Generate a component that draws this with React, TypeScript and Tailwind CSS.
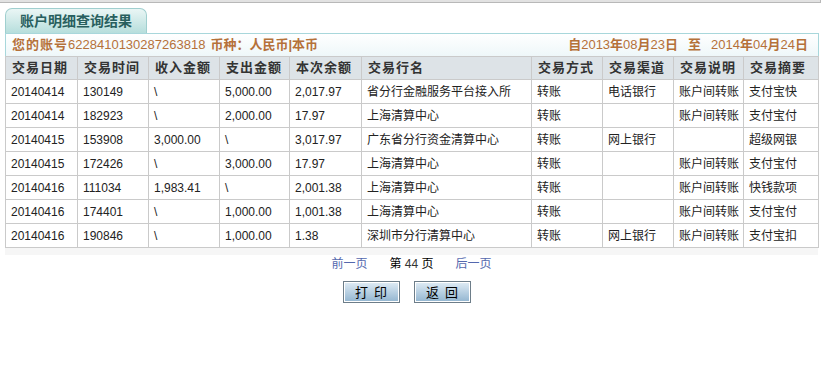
const rows = [
  ['20140414', '130149', '\\', '5,000.00', '2,017.97', '省分行金融服务平台接入所', '转账', '电话银行', '账户间转账', '支付宝快'],
  ['20140414', '182923', '\\', '2,000.00', '17.97', '上海清算中心', '转账', '', '账户间转账', '支付宝付'],
  ['20140415', '153908', '3,000.00', '\\', '3,017.97', '广东省分行资金清算中心', '转账', '网上银行', '', '超级网银'],
  ['20140415', '172426', '\\', '3,000.00', '17.97', '上海清算中心', '转账', '', '账户间转账', '支付宝付'],
  ['20140416', '111034', '1,983.41', '\\', '2,001.38', '上海清算中心', '转账', '', '账户间转账', '快钱款项'],
  ['20140416', '174401', '\\', '1,000.00', '1,001.38', '上海清算中心', '转账', '', '账户间转账', '支付宝付'],
  ['20140416', '190846', '\\', '1,000.00', '1.38', '深圳市分行清算中心', '转账', '网上银行', '账户间转账', '支付宝扣'],
]

const headers = ['交易日期', '交易时间', '收入金额', '支出金额', '本次余额', '交易行名', '交易方式', '交易渠道', '交易说明', '交易摘要']
const widths = [72, 71, 71, 70, 72, 170, 71, 71, 70, 75]

function Button({ label }: { label: string }) {
  return (
    <button className="w-[57px] h-[22px] border border-[#6d7d89] shadow-[inset_0_0_0_1px_#ffffff] bg-gradient-to-b from-[#e0ecf5] to-[#92b5d0] text-[13px] text-black tracking-[6px] pl-[6px] leading-none">
      {label}
    </button>
  )
}

export default function App() {
  return (
    <div className="w-[829px] h-[369px] bg-white text-[#222] font-['Liberation_Sans','Noto_Sans_CJK_SC',sans-serif]">
      <div className="h-[3px] w-[821px] bg-[#e2e2e2] border-b border-r border-[#b8b8b8]" />

      <div className="pl-[5px] pt-[5px] w-[819px]">
        {/* tab */}
        <div className="w-[142px] h-[25px] rounded-t-[7px] border border-b-0 border-[#a0cfcf] bg-gradient-to-b from-[#eaf6f5] to-[#b6dedc] flex items-center justify-center text-[14px] font-bold text-[#285f5e]">
          账户明细查询结果
        </div>

        {/* account info bar */}
        <div className="h-[23px] border border-b-0 border-[#a8d7db] bg-gradient-to-b from-white to-[#eef7f9] flex items-center justify-between pl-[6px] pr-[10px] text-[13px] text-[#b5713a]">
          <div>
            <span className="font-bold tracking-[1px]">您的账号</span>
            <span>6228410130287263818</span>
            <span className="font-bold ml-[5px]">币种：人民币|本币</span>
          </div>
          <div className="font-bold">
            自<span className="font-normal">2013</span>年<span className="font-normal">08</span>月
            <span className="font-normal">23</span>日<span className="mx-[10px]">至</span>
            <span className="font-normal">2014</span>年<span className="font-normal">04</span>月
            <span className="font-normal">24</span>日
          </div>
        </div>

        {/* result table */}
        <table className="table-fixed border-collapse w-[813px] text-[12px]">
          <colgroup>
            {widths.map((w, i) => (
              <col key={i} style={{ width: w }} />
            ))}
          </colgroup>
          <thead>
            <tr className="h-[23px] bg-[#dde3e7]">
              {headers.map((h) => (
                <th key={h} className="border border-[#cacaca] text-left pl-[6px] pr-0 font-bold text-[13px] tracking-[1px] text-[#333] whitespace-nowrap">
                  {h}
                </th>
              ))}
            </tr>
          </thead>
          <tbody>
            {rows.map((r, i) => (
              <tr key={i} className="h-[24px] bg-white">
                {r.map((c, j) => (
                  <td key={j} className="border border-[#cacaca] pl-[5px] pr-0 whitespace-nowrap">
                    {c}
                  </td>
                ))}
              </tr>
            ))}
          </tbody>
        </table>
        <div className="h-[7px] w-[813px] bg-[#f6f6f6]" />

        {/* pager */}
        <div className="w-[813px] flex justify-center items-center gap-[22px] h-[16px] text-[12px] mt-[1px]">
          <a className="text-[#5468ae]">前一页</a>
          <span className="text-black">
            第 <span className="text-[#333]">44</span> 页
          </span>
          <a className="text-[#5468ae]">后一页</a>
        </div>

        <div className="w-[813px] flex justify-center gap-[14px] mt-[9px] pr-[10px]">
          <Button label="打印" />
          <Button label="返回" />
        </div>
      </div>
    </div>
  )
}
